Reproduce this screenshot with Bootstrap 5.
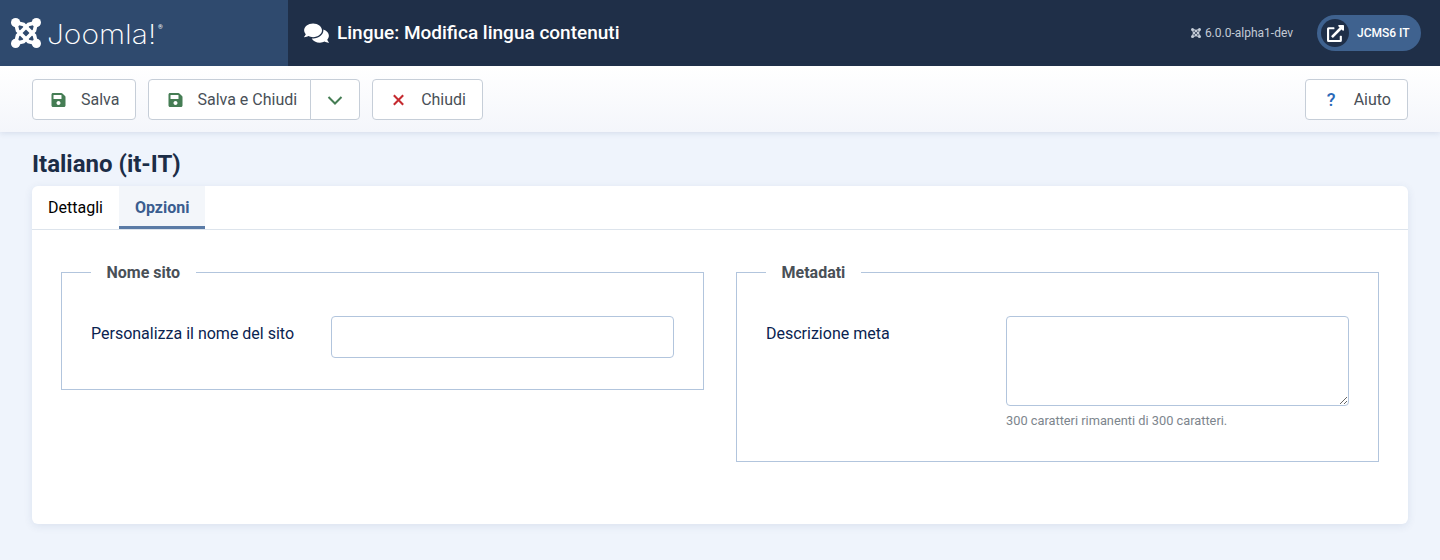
<!DOCTYPE html>
<html lang="it">

<head>
    <meta charset="UTF-8">
    <meta name="viewport" content="width=device-width, initial-scale=1">
    <title>Lingue: Modifica lingua contenuti</title>

    <link href="https://cdn.jsdelivr.net/npm/bootstrap@5.3.2/dist/css/bootstrap.min.css" rel="stylesheet">

    <style>
        body {
            background: #eff4fc;
            font-family: Roboto, "Liberation Sans", sans-serif;
            color: #1c2d47;
        }

        .top-bar {
            height: 66px;
            background: #1f2f48;
        }

        .brand-box {
            width: 288px;
            background: #2f4a6e;
            padding-left: 11px;
            color: #fff;
        }

        .brand-word {
            font-family: Inter, Lato, sans-serif;
            font-weight: 200;
            font-size: 27px;
            line-height: 1;
            margin: 2px 0 0 6px;
            width: 110px;
            display: inline-block;
            transform: scaleX(1.11);
            transform-origin: left center;
        }

        .brand-reg {
            font-size: 6px;
            line-height: 8px;
            align-self: flex-start;
            margin-top: 23px;
            margin-left: 1px;
        }

        .page-name {
            font-size: 19px;
            font-weight: 500;
            color: #fff;
            margin: 0;
            padding-left: 16px;
        }

        .page-name svg {
            width: 25px;
            height: 22px;
            margin-right: 8px;
            fill: #fff;
        }

        .version-text {
            font-size: 12px;
            color: #c3cbd6;
            margin-right: 24px;
        }

        .site-pill {
            height: 36px;
            width: 104px;
            margin-right: 19px;
            padding-left: 4px;
            border-radius: 18px;
            background: #3f628f;
            color: #fff;
            font-size: 12px;
            font-weight: 500;
            text-decoration: none;
        }

        .pill-circle {
            width: 28px;
            height: 28px;
            border-radius: 50%;
            background: #1f2f48;
            margin-right: 8px;
        }

        .tool-bar {
            height: 66px;
            padding: 13px 32px 0;
            background: linear-gradient(#fff, #f4f6fb);
            box-shadow: 0 1px 6px rgba(40, 70, 120, .14);
            position: relative;
        }

        .tool-btn {
            height: 41px;
            display: inline-flex;
            align-items: center;
            padding: 0 16px 0 18px;
            background: #fff;
            border: 1px solid #c6ced8;
            border-radius: 4px;
            color: #495057;
            font-size: 16px;
        }

        .tool-btn svg {
            width: 15px;
            height: 16px;
            margin-right: 15px;
        }

        .btn-group>.tool-btn {
            flex: none;
        }

        .btn-group>.save-close {
            padding-right: 13px;
            padding-left: 19px;
        }

        .btn-group>.save-close svg {
            margin-right: 14px;
        }

        .caret-btn {
            padding: 0 16px;
        }

        .caret-btn svg {
            width: 16px;
            margin: 0;
        }

        .help-mark {
            color: #2a69b8;
            font-size: 18px;
            font-weight: 500;
            width: 15px;
            margin-right: 15px;
            text-align: center;
        }

        .page-title {
            font-size: 24px;
            font-weight: 700;
            line-height: 28px;
            margin: 18px 32px 8px;
            color: #1c2d47;
        }

        .main-card {
            margin: 0 32px 36px;
            height: 338px;
            border: 0;
            border-radius: 6px;
            box-shadow: 0 2px 8px rgba(40, 70, 120, .1);
        }

        .tab-row {
            height: 44px;
            border-bottom: 1px solid #dde4ec;
        }

        .tab-row .nav-link {
            height: 43px;
            padding: 0 16px;
            line-height: 43px;
            color: #000;
            font-size: 16px;
            border-radius: 0;
        }

        .tab-row .nav-link.active {
            background: #f3f6fa;
            color: #3a5d8f;
            font-weight: 700;
            border-bottom: 3px solid #5a7ba6;
        }

        .form-area {
            padding: 29px 29px 0;
            gap: 32px;
        }

        .opt-set {
            flex: 1 1 0;
            border: 1px solid #b2c5dd;
            padding: 0 29px 31px;
            align-self: flex-start;
            min-width: 0;
        }

        .opt-set legend {
            float: none;
            width: auto;
            margin: 0 0 31px;
            padding: 2px 15.5px 0;
            font-size: 16px;
            line-height: 24px;
            font-weight: 700;
            color: #495057;
        }

        .opt-label {
            width: 240px;
            flex: none;
            padding-top: 6px;
            margin: 0;
            color: #0a2350;
            font-size: 16px;
        }

        .opt-field {
            width: 343px;
            flex: none;
        }

        .opt-field .form-control {
            height: 42px;
            border-color: #b2c5dd;
            border-radius: 4px;
        }

        .opt-field textarea.form-control {
            height: 90px;
        }

        .opt-hint {
            font-size: 12.8px;
            line-height: 19px;
            margin-top: 5px;
            color: #7d858d;
        }
    </style>
</head>

<body>
    <svg width="0" height="0" class="d-block" aria-hidden="true">
        <symbol id="joomla-mark" viewBox="0 0 30 30">
            <g fill="none" stroke="currentColor" stroke-width="3.6">
                <path d="M4.6 4.6 L12.5 6.5 L23.5 17.5 L25.4 25.4" />
                <path d="M4.6 4.6 L6.5 12.5 L17.5 23.5 L25.4 25.4" />
                <path d="M25.4 4.6 L17.5 6.5 L6.5 17.5 L4.6 25.4" />
                <path d="M25.4 4.6 L23.5 12.5 L12.5 23.5 L4.6 25.4" />
            </g>
            <g fill="currentColor">
                <circle cx="4.6" cy="4.6" r="4.6" />
                <circle cx="25.4" cy="4.6" r="4.6" />
                <circle cx="4.6" cy="25.4" r="4.6" />
                <circle cx="25.4" cy="25.4" r="4.6" />
            </g>
        </symbol>
        <symbol id="save-icon" viewBox="0 0 448 512">
            <path fill="#457d54" d="M433.941 129.941l-83.882-83.882A48 48 0 0 0 316.118 32H48C21.49 32 0 53.49 0 80v352c0 26.51 21.49 48 48 48h352c26.51 0 48-21.49 48-48V163.882a48 48 0 0 0-14.059-33.941zM224 416c-35.346 0-64-28.654-64-64 0-35.346 28.654-64 64-64s64 28.654 64 64c0 35.346-28.654 64-64 64zm96-304.52V212c0 6.627-5.373 12-12 12H76c-6.627 0-12-5.373-12-12V108c0-6.627 5.373-12 12-12h228.52c3.183 0 6.235 1.264 8.485 3.515l3.48 3.48A11.996 11.996 0 0 1 320 111.48z" />
        </symbol>
    </svg>

    <!-- header -->
    <header class="top-bar d-flex align-items-center">
        <div class="brand-box h-100 d-flex align-items-center">
            <svg width="30" height="30"><use href="#joomla-mark" /></svg>
            <span class="brand-word">Joomla!</span><span class="brand-reg">®</span>
        </div>
        <h1 class="page-name d-flex align-items-center">
            <svg viewBox="0 0 576 512"><path d="M416 192c0-88.4-93.1-160-208-160S0 103.6 0 192c0 34.3 14.1 65.9 38 92-13.4 30.2-35.5 54.2-35.8 54.5-2.2 2.3-2.8 5.7-1.5 8.7S4.8 352 8 352c36.6 0 66.9-12.3 88.7-25 32.2 15.7 70.3 25 111.3 25 114.9 0 208-71.6 208-160zm122 220c23.9-26 38-57.7 38-92 0-66.9-53.5-124.2-129.3-148.1.9 6.6 1.3 13.3 1.3 20.1 0 105.9-107.7 192-240 192-10.8 0-21.3-.8-31.7-1.9C207.8 439.6 281.8 480 368 480c41 0 79.1-9.2 111.3-25 21.8 12.7 52.1 25 88.7 25 3.2 0 6.1-1.9 7.3-4.8 1.3-2.9.7-6.3-1.5-8.7-.3-.3-22.4-24.2-35.8-54.5z" /></svg>
            Lingue: Modifica lingua contenuti
        </h1>
        <div class="ms-auto d-flex align-items-center">
            <span class="version-text d-flex align-items-center gap-1"><svg width="10" height="10"><use href="#joomla-mark" /></svg>6.0.0-alpha1-dev</span>
            <a href="#" class="site-pill d-flex align-items-center">
                <span class="pill-circle d-flex align-items-center justify-content-center">
                    <svg width="17" height="17" viewBox="0 0 512 512" fill="#fff"><path d="M432 320h-32a16 16 0 0 0-16 16v112H64V128h144a16 16 0 0 0 16-16V80a16 16 0 0 0-16-16H48a48 48 0 0 0-48 48v352a48 48 0 0 0 48 48h352a48 48 0 0 0 48-48V336a16 16 0 0 0-16-16zM488 0H360c-21.37 0-32.05 25.91-17 41l35.73 35.73L135 320.37a24 24 0 0 0 0 34L157.67 377a24 24 0 0 0 34 0l243.61-243.68L471 169c15 15 41 4.5 41-17V24a24 24 0 0 0-24-24z" /></svg>
                </span>
                JCMS6 IT
            </a>
        </div>
    </header>

    <!-- toolbar -->
    <div class="tool-bar d-flex gap-2 align-items-start">
        <button class="btn tool-btn" type="button"><svg><use href="#save-icon" /></svg>Salva</button>
        <div class="btn-group ms-1">
            <button class="btn tool-btn save-close" type="button"><svg><use href="#save-icon" /></svg>Salva e Chiudi</button>
            <button class="btn tool-btn caret-btn" type="button">
                <svg viewBox="0 0 16 16" fill="none" stroke="#457d54" stroke-width="2"><path d="M1.5 5 L8 11.5 L14.5 5" /></svg>
            </button>
        </div>
        <button class="btn tool-btn ms-1" type="button">
            <svg viewBox="0 0 16 16" fill="none" stroke="#c52a2f" stroke-width="2.2"><path d="M3 3 L13 13 M13 3 L3 13" /></svg>Chiudi
        </button>
        <button class="btn tool-btn ms-auto" type="button"><span class="help-mark">?</span>Aiuto</button>
    </div>

    <h2 class="page-title">Italiano (it-IT)</h2>

    <div class="card main-card">
        <ul class="nav tab-row">
            <li class="nav-item"><a class="nav-link" href="#">Dettagli</a></li>
            <li class="nav-item"><a class="nav-link active" href="#">Opzioni</a></li>
        </ul>
        <div class="form-area d-flex">
            <fieldset class="opt-set">
                <legend>Nome sito</legend>
                <div class="d-flex">
                    <label class="opt-label" for="siteName">Personalizza il nome del sito</label>
                    <div class="opt-field"><input type="text" class="form-control" id="siteName"></div>
                </div>
            </fieldset>
            <fieldset class="opt-set">
                <legend>Metadati</legend>
                <div class="d-flex">
                    <label class="opt-label" for="metaDesc">Descrizione meta</label>
                    <div class="opt-field">
                        <textarea class="form-control" id="metaDesc"></textarea>
                        <div class="opt-hint">300 caratteri rimanenti di 300 caratteri.</div>
                    </div>
                </div>
            </fieldset>
        </div>
    </div>

    <script src="https://cdn.jsdelivr.net/npm/bootstrap@5.3.2/dist/js/bootstrap.bundle.min.js"></script>
</body>

</html>
